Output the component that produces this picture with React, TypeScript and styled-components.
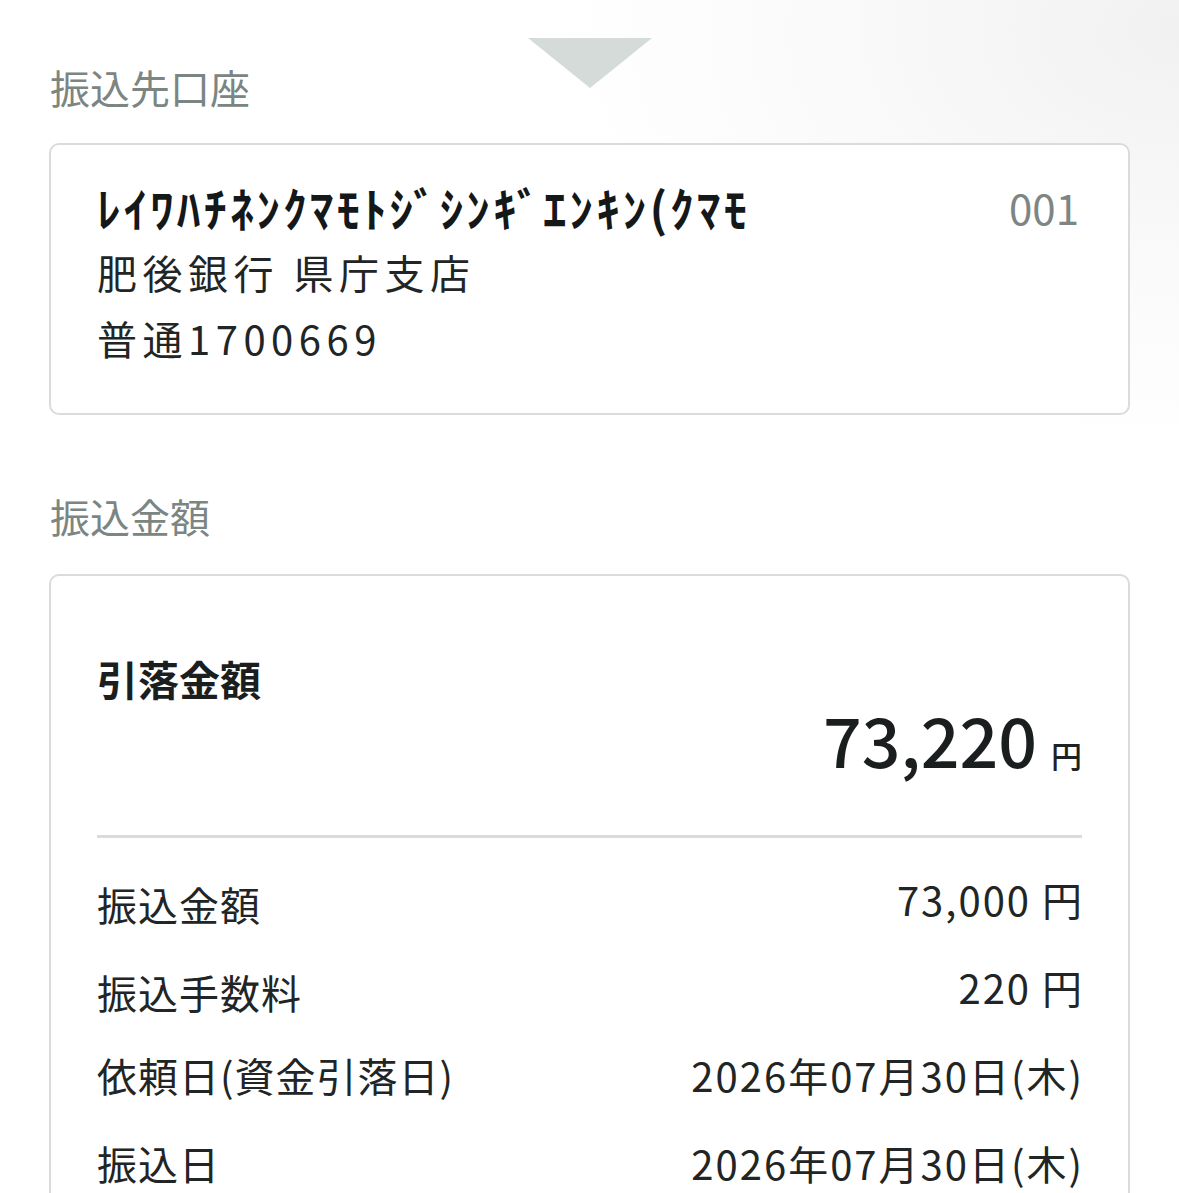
import styled, { createGlobalStyle } from 'styled-components';

const GlobalStyle = createGlobalStyle`
  body {
    margin: 0;
    background: radial-gradient(ellipse 620px 420px at 1179px 30px, #f1f1f1 0%, #f9f9f9 50%, #ffffff 100%);
    font-family: "Noto Sans CJK JP", "Noto Sans", sans-serif;
    color: #1f2222;
  }
`;

const Page = styled.main`
  width: 1179px;
  height: 1193px;
  overflow: hidden;
  padding: 0 49px;
  box-sizing: border-box;
`;

const Section = styled.section<{ $top: number }>`
  position: relative;
  padding-top: ${p => p.$top}px;
`;

const Arrow = styled.div`
  position: absolute;
  top: 38px;
  left: calc(50% - 62px);
  width: 0;
  height: 0;
  border-left: 62px solid transparent;
  border-right: 62px solid transparent;
  border-top: 50px solid #d5dbd9;
`;

const Heading = styled.h2<{ $gap: number }>`
  margin: 0 0 ${p => p.$gap}px 1px;
  font-size: 40px;
  line-height: 50px;
  font-weight: 400;
  color: #7b8582;
`;

const Card = styled.div`
  border: 2px solid #d8dcdb;
  border-radius: 10px;
  background: #fff;
  box-sizing: border-box;
`;

const AccountCard = styled(Card)`
  padding: 28px 49px 42px 46px;
`;

const NameRow = styled.div`
  display: flex;
  justify-content: space-between;
  align-items: center;
  height: 66px;
`;

const Name = styled.span`
  font-size: 47px;
  font-weight: 700;
  letter-spacing: 3.1px;
  color: #151818;
`;

const Code = styled.span`
  font-size: 42px;
  color: #7d8683;
`;

const Line = styled.div`
  font-size: 40px;
  line-height: 66px;
  letter-spacing: 5.5px;
  color: #222525;
`;

const AmountCard = styled(Card)`
  padding: 72px 46px 0 46px;
  height: 700px;
`;

const TotalLabel = styled.div`
  font-size: 41px;
  line-height: 60px;
  font-weight: 700;
  color: #1b1e1e;
`;

const TotalRow = styled.div`
  display: flex;
  justify-content: flex-end;
  align-items: baseline;
  gap: 14px;
  margin-top: -6px;
  height: 65px;
`;

const TotalValue = styled.span`
  font-size: 68px;
  line-height: 74px;
  font-weight: 500;
  color: #1b1e1e;
`;

const Yen = styled.span`
  font-size: 31px;
  font-weight: 500;
`;

const Divider = styled.hr`
  margin: 68px 0 17px;
  border: none;
  border-top: 3px solid #d8dcdb;
`;

const Row = styled.div`
  display: flex;
  justify-content: space-between;
  align-items: center;
  height: 88px;
  font-size: 40px;
  color: #222525;
`;

const Label = styled.span<{ $shift?: number }>`
  position: relative;
  top: ${p => p.$shift ?? 0}px;
  letter-spacing: 1px;
`;

const Value = styled.span`
  white-space: pre;
  letter-spacing: 2px;
  margin-right: -2px;
`;

const rows = [
  { label: '振込金額', value: '73,000 円', shift: 5 },
  { label: '振込手数料', value: '220 円', shift: 5 },
  { label: '依頼日(資金引落日)', value: '2026年07月30日(木)', shift: 0 },
  { label: '振込日', value: '2026年07月30日(木)', shift: 0 },
];

export default function App() {
  return (
    <Page>
      <GlobalStyle />
      <Section $top={62}>
        <Arrow />
        <Heading $gap={31}>振込先口座</Heading>
        <AccountCard>
          <NameRow>
            <Name>ﾚｲﾜﾊﾁﾈﾝｸﾏﾓﾄｼﾞｼﾝｷﾞｴﾝｷﾝ(ｸﾏﾓ</Name>
            <Code>001</Code>
          </NameRow>
          <Line>肥後銀行 県庁支店</Line>
          <Line>普通1700669</Line>
        </AccountCard>
      </Section>
      <Section $top={76}>
        <Heading $gap={33}>振込金額</Heading>
        <AmountCard>
          <TotalLabel>引落金額</TotalLabel>
          <TotalRow>
            <TotalValue>73,220</TotalValue>
            <Yen>円</Yen>
          </TotalRow>
          <Divider />
          {rows.map(r => (
            <Row key={r.label}>
              <Label $shift={r.shift}>{r.label}</Label>
              <Value>{r.value}</Value>
            </Row>
          ))}
        </AmountCard>
      </Section>
    </Page>
  );
}
